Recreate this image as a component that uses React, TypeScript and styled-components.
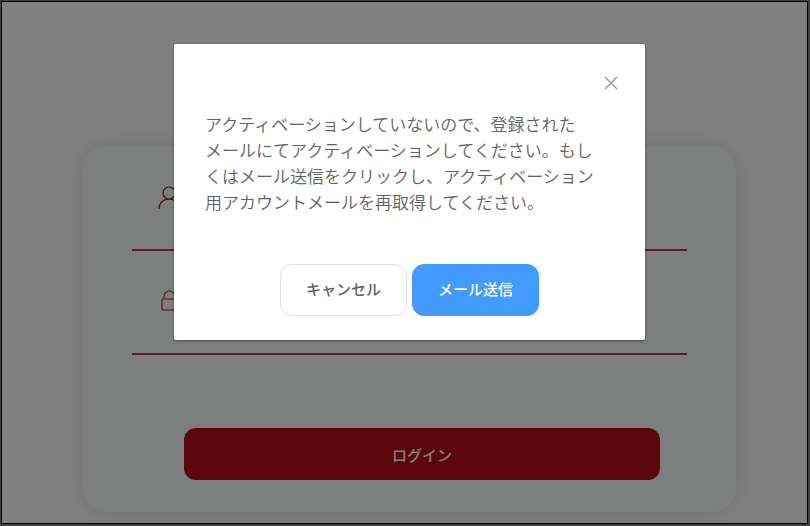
import React from "react";
import styled, { createGlobalStyle } from "styled-components";

const GlobalStyle = createGlobalStyle`
  *, *::before, *::after { box-sizing: border-box; }
  html, body { margin: 0; }
  body { background: #ffffff; overflow: hidden; }
  body, button, input { font-family: "Noto Sans CJK JP", "Noto Sans", sans-serif; }
`;

const Page = styled.div`
  position: relative;
  display: flex;
  min-height: 100vh;
  padding: 1px 2px 2px 1px;
  background: #404040;
`;

const LoginScreen = styled.main`
  flex: 1;
  display: flex;
  justify-content: center;
  align-items: flex-start;
  padding: 144px 71px 11px 81px;
  border: 1px solid #000000;
  background: #ffffff;
`;

const LoginCard = styled.form`
  flex: 1;
  display: flex;
  flex-direction: column;
  padding: 0 49px 32px;
  border-radius: 24px;
  background: #f8fffc;
  box-shadow: 0 0 20px rgba(0, 0, 0, 0.11);
`;

const Field = styled.label`
  display: flex;
  align-items: center;
  height: 104px;
  padding: 0 24px;
  border-bottom: 2px solid #b03c50;
  color: #a81828;
`;

const FieldInput = styled.input`
  flex: 1;
  min-width: 0;
  padding: 0 12px;
  border: 0;
  outline: 0;
  background: transparent;
  font-size: 16px;
`;

const Fields = styled.div`
  padding-top: 1px;
`;

const LoginButton = styled.button`
  height: 52px;
  margin: 73px 27px 0 52px;
  padding: 0;
  border: 0;
  border-radius: 12px;
  background: #b40c16;
  color: #ffffff;
  font-size: 15px;
  font-weight: 500;
`;

const Overlay = styled.div`
  position: absolute;
  inset: 2px 3px 3px 2px;
  display: flex;
  justify-content: center;
  align-items: flex-start;
  padding: 42px 162px 0 172px;
  background: rgba(0, 0, 0, 0.5);
`;

const Dialog = styled.section`
  width: 100%;
  max-width: 471px;
  display: flex;
  flex-direction: column;
  padding: 29px 24px 24px 31px;
  border-radius: 2px;
  background: #ffffff;
  box-shadow: 0 1px 3px rgba(0, 0, 0, 0.4);
`;

const CloseButton = styled.button`
  align-self: flex-end;
  display: flex;
  padding: 0;
  border: 0;
  background: transparent;
  color: #909399;
`;

const Message = styled.p`
  margin: 18px 16px 0 0;
  color: #606266;
  font-size: 17px;
  font-weight: 350;
  line-height: 26px;
`;

const Actions = styled.div`
  display: flex;
  justify-content: center;
  gap: 5px;
  margin-top: 49px;
  padding-right: 7px;
`;

const ActionButton = styled.button<{ $primary?: boolean }>`
  width: 127px;
  height: 52px;
  padding: 0 0 4px;
  border: 1px solid ${(p) => (p.$primary ? "#449bff" : "#dcdfe9")};
  border-radius: 12px;
  background: ${(p) => (p.$primary ? "#449bff" : "#ffffff")};
  color: ${(p) => (p.$primary ? "#ffffff" : "#606266")};
  font-size: 15px;
  font-weight: 500;
`;

const UserIcon = () => (
  <svg width="28" height="28" viewBox="0 0 28 28" fill="none" stroke="currentColor" strokeWidth="1.2" aria-hidden="true">
    <circle cx="13" cy="9" r="6" />
    <path d="M3 25C3 19 7 15 13 15S23 19 23 25" />
  </svg>
);

const LockIcon = () => (
  <svg width="28" height="28" viewBox="0 0 28 28" fill="none" stroke="currentColor" strokeWidth="1.1" aria-hidden="true">
    <rect x="6" y="11" width="15" height="11" rx="1" />
    <path d="M8 11V8.500a5.500 5.500 0 0 1 11 0V11" />
  </svg>
);

const CloseIcon = () => (
  <svg width="20" height="20" viewBox="0 0 20 20" stroke="currentColor" strokeWidth="1.2" aria-hidden="true">
    <path d="M4 4 16 16M16 4 4 16" />
  </svg>
);

export default function App() {
  return (
    <>
      <GlobalStyle />
      <Page>
        <LoginScreen>
          <LoginCard onSubmit={(event) => event.preventDefault()}>
            <Fields>
              <Field>
                <UserIcon />
                <FieldInput type="text" name="user" aria-label="ユーザー" />
              </Field>
              <Field>
                <LockIcon />
                <FieldInput type="password" name="password" aria-label="パスワード" />
              </Field>
            </Fields>
            <LoginButton type="submit">ログイン</LoginButton>
          </LoginCard>
        </LoginScreen>
        <Overlay>
          <Dialog role="dialog" aria-modal="true" aria-describedby="message">
            <CloseButton type="button" aria-label="閉じる">
              <CloseIcon />
            </CloseButton>
            <Message id="message">
              アクティベーションしていないので、登録された
              <br />
              メールにてアクティベーションしてください。もしくはメール送信をクリックし、アクティベーション用アカウントメールを再取得してください。
            </Message>
            <Actions>
              <ActionButton type="button">キャンセル</ActionButton>
              <ActionButton type="button" $primary>
                メール送信
              </ActionButton>
            </Actions>
          </Dialog>
        </Overlay>
      </Page>
    </>
  );
}
